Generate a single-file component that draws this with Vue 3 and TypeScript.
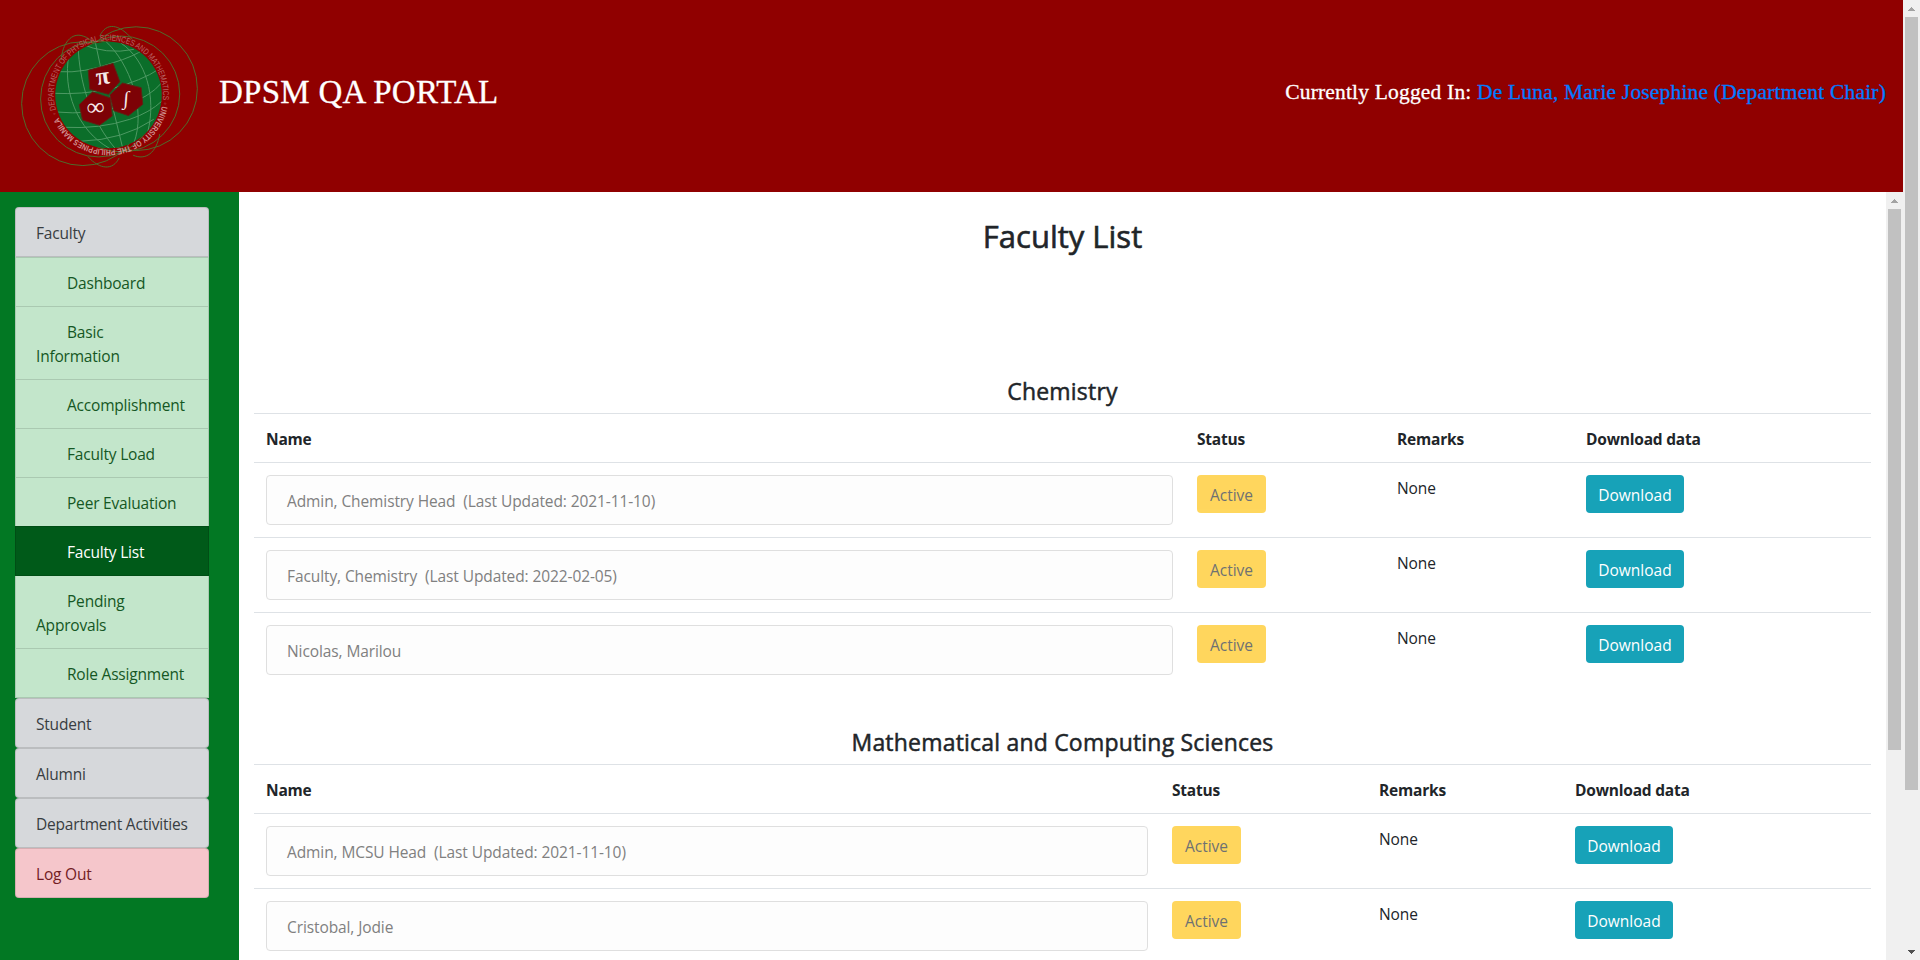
<script setup lang="ts">
interface NavItem {
  label: string
  kind: 'group' | 'sub' | 'exit'
  active?: boolean
}
interface Person {
  name: string
  updated?: string
}
interface Unit {
  title: string
  columns: number[]
  people: Person[]
}

const nav: NavItem[] = [
  { label: 'Faculty', kind: 'group' },
  { label: 'Dashboard', kind: 'sub' },
  { label: 'Basic Information', kind: 'sub' },
  { label: 'Accomplishment', kind: 'sub' },
  { label: 'Faculty Load', kind: 'sub' },
  { label: 'Peer Evaluation', kind: 'sub' },
  { label: 'Faculty List', kind: 'sub', active: true },
  { label: 'Pending Approvals', kind: 'sub' },
  { label: 'Role Assignment', kind: 'sub' },
  { label: 'Student', kind: 'group' },
  { label: 'Alumni', kind: 'group' },
  { label: 'Department Activities', kind: 'group' },
  { label: 'Log Out', kind: 'exit' },
]

const units: Unit[] = [
  {
    title: 'Chemistry',
    columns: [931, 200, 189, 297],
    people: [
      { name: 'Admin, Chemistry Head', updated: '2021-11-10' },
      { name: 'Faculty, Chemistry', updated: '2022-02-05' },
      { name: 'Nicolas, Marilou' },
    ],
  },
  {
    title: 'Mathematical and Computing Sciences',
    columns: [906, 207, 196, 308],
    people: [
      { name: 'Admin, MCSU Head', updated: '2021-11-10' },
      { name: 'Cristobal, Jodie' },
    ],
  },
]

const headings = ['Name', 'Status', 'Remarks', 'Download data']
</script>

<template>
  <div class="window">
    <div class="page">
      <header class="banner">
        <svg class="logo" viewBox="0 0 640 576" width="213" height="192">
          <defs>
            <clipPath id="globe"><circle cx="326" cy="285" r="160" /></clipPath>
            <path id="ring" d="M172 342 A164 164 0 0 1 480 228 A164 164 0 0 1 172 342" />
          </defs>
          <g class="orbits">
            <ellipse cx="249" cy="311" rx="184" ry="186" />
            <ellipse cx="409" cy="266" rx="184" ry="186" />
            <ellipse cx="296" cy="297" rx="174" ry="174" />
            <ellipse cx="364" cy="282" rx="176" ry="174" />
            <path d="M184 180 C187 130 215 95 250 108 C265 112 275 122 284 134" />
            <path d="M300 108 C318 66 358 70 398 118" />
            <path d="M264 470 C300 510 340 512 358 474" />
            <path d="M400 466 C438 482 470 460 480 402" />
          </g>
          <circle cx="326" cy="285" r="160" fill="#0b6e2a" />
          <g class="grid" clip-path="url(#globe)">
            <path d="M285 120 L302 200 M330 285 L370 450" />
            <path d="M235 140 C238 240 270 360 350 450" />
            <path d="M207 165 C188 270 230 390 330 446" />
            <path d="M318 124 C390 190 440 330 402 430" />
            <path d="M362 128 C440 180 470 290 444 396" />
            <path d="M240 130 Q320 165 402 148" />
            <path d="M180 215 Q250 220 340 188 Q400 170 436 146" />
            <path d="M166 280 Q240 284 330 268 Q430 240 476 208" />
            <path d="M168 336 Q270 346 370 318 Q450 292 486 248" />
            <path d="M190 382 Q300 388 390 358 Q450 338 488 302" />
            <path d="M242 424 Q370 420 462 358" />
          </g>
          <g class="tiles">
            <path d="M265 211 L340 190 L360 245 L326 283 L270 268 Z" />
            <path d="M278 276 L332 294 L337 348 L299 376 L248 360 L238 314 Z" />
            <path d="M330 285 L368 249 L424 263 L429 313 L386 347 L342 332 Z" />
          </g>
          <g class="symbols">
            <text x="310" y="252" font-size="74" transform="rotate(-8 310 240)">π</text>
            <text x="287" y="345" font-size="74" transform="rotate(-5 287 324)">∞</text>
            <text x="379" y="315" font-size="60" transform="rotate(4 379 300)">∫</text>
          </g>
          <text class="ring">
            <textPath href="#ring" textLength="1020" lengthAdjust="spacingAndGlyphs">◦ DEPARTMENT OF PHYSICAL SCIENCES AND MATHEMATICS ◦ <tspan class="ring-lower">UNIVERSITY OF THE PHILIPPINES MANILA</tspan></textPath>
          </text>
        </svg>
        <h1 class="brand">DPSM QA PORTAL</h1>
        <p class="session">Currently Logged In: <a>De Luna, Marie Josephine (Department Chair)</a></p>
      </header>

      <div class="body">
        <nav class="sidebar">
          <ul class="menu">
            <li
              v-for="item in nav"
              :key="item.label"
              class="entry"
              :class="[item.kind, { active: item.active }]"
            >{{ item.label }}</li>
          </ul>
        </nav>

        <main class="content">
          <h2 class="title">Faculty List</h2>
          <section v-for="unit in units" :key="unit.title" class="unit">
            <h4 class="unit-title">{{ unit.title }}</h4>
            <table class="people">
              <colgroup>
                <col v-for="(w, i) in unit.columns" :key="i" :style="{ width: w + 'px' }" />
              </colgroup>
              <thead>
                <tr>
                  <th v-for="h in headings" :key="h">{{ h }}</th>
                </tr>
              </thead>
              <tbody>
                <tr v-for="p in unit.people" :key="p.name">
                  <td>
                    <div class="name">{{ p.name }}<template v-if="p.updated">&nbsp; (Last Updated: {{ p.updated }})</template></div>
                  </td>
                  <td><button class="btn status">Active</button></td>
                  <td class="remarks">None</td>
                  <td><button class="btn download">Download</button></td>
                </tr>
              </tbody>
            </table>
          </section>
        </main>

        <div class="scrollbar inner">
          <svg class="arrow" width="17" height="17"><path d="M5 11h7v-1h-1v-1h-1v-1h-1v-1h-1v1h-1v1h-1v1h-1z" fill="#a3a3a3" /></svg>
          <div class="thumb"></div>
        </div>
      </div>
    </div>

    <div class="scrollbar outer">
      <svg class="arrow" width="17" height="17"><path d="M5 11h7v-1h-1v-1h-1v-1h-1v-1h-1v1h-1v1h-1v1h-1z" fill="#a3a3a3" /></svg>
      <div class="thumb"></div>
      <svg class="arrow down" width="17" height="17"><path d="M5 7h7v1h-1v1h-1v1h-1v1h-1v-1h-1v-1h-1v-1h-1z" fill="#505050" /></svg>
    </div>
  </div>
</template>

<style>
body {
  margin: 0;
  overflow: hidden;
}
</style>

<style scoped>
* {
  box-sizing: border-box;
}
.window {
  display: flex;
  width: 1920px;
  height: 960px;
  overflow: hidden;
  font: 400 15.5px/24px 'Open Sans', 'Noto Sans', sans-serif;
  color: #212529;
  background: #fff;
}
.page {
  display: flex;
  flex-direction: column;
  width: 1903px;
}
.banner {
  display: flex;
  align-items: center;
  flex: none;
  height: 192px;
  padding-right: 17px;
  background: #900000;
  color: #fff;
  font-family: 'Liberation Serif', serif;
}
.logo {
  flex: none;
}
.orbits {
  fill: none;
  stroke: #4f6b2b;
  stroke-width: 3;
}
.grid {
  fill: none;
  stroke: #4d9a63;
  stroke-width: 3;
}
.tiles {
  fill: #7d0206;
  stroke: #5b2414;
  stroke-width: 3;
}
.symbols {
  fill: #f5e9e9;
  text-anchor: middle;
  font-family: 'Liberation Serif', serif;
  font-weight: 700;
}
.ring {
  fill: #b96464;
  font: 400 25px 'Liberation Sans', sans-serif;
}
.ring-lower {
  fill: #d09090;
  font-weight: 700;
}
.brand {
  margin: 0 auto 8px 6px;
  font-size: 33px;
  font-weight: 400;
  line-height: 38px;
  letter-spacing: 0.25px;
  white-space: nowrap;
  -webkit-text-stroke: 0.3px currentColor;
}
.session {
  margin: 0 0 8px;
  font-size: 21.5px;
  letter-spacing: 0.18px;
  white-space: nowrap;
  -webkit-text-stroke: 0.3px currentColor;
}
.session a {
  color: #007bff;
  -webkit-text-stroke-color: #007bff;
}
.body {
  display: flex;
  flex: none;
  height: 768px;
  overflow: hidden;
}
.sidebar {
  flex: none;
  width: 239px;
  padding: 15px;
  background: #027823;
  letter-spacing: -0.2px;
}
.menu {
  width: 194px;
  margin: 0;
  padding: 0;
  list-style: none;
}
.entry {
  padding: 13px 20px 11px;
  border: 1px solid rgba(0, 0, 0, 0.125);
}
.group {
  border-radius: 4px;
  background: #d6d8db;
  color: #383d41;
  white-space: nowrap;
}
.exit {
  border-radius: 4px;
  background: #f5c6cb;
  color: #721c24;
}
.sub {
  border-top-width: 0;
  background: #c3e6cb;
  color: #155724;
  text-indent: 31px;
}
.group:first-child {
  border-radius: 4px 4px 0 0;
}
.group + .sub {
  border-top-width: 1px;
}
.sub.active {
  margin-top: -1px;
  border-top-width: 1px;
  background: #005a19;
  color: #fff;
}
.content {
  flex: none;
  width: 1647px;
  padding: 25px 15px 0;
  overflow: hidden;
}
.title {
  margin: 0 0 122px;
  font-size: 31px;
  font-weight: 500;
  line-height: 38px;
  text-align: center;
  -webkit-text-stroke: 0.6px currentColor;
}
.unit {
  margin-bottom: 41px;
}
.unit-title {
  margin: 0 0 7px;
  font-size: 23px;
  font-weight: 500;
  line-height: 29px;
  letter-spacing: 0.2px;
  text-align: center;
  -webkit-text-stroke: 0.5px currentColor;
}
.people {
  width: 1617px;
  table-layout: fixed;
  border-collapse: separate;
  border-spacing: 0;
}
th,
td {
  padding: 12px;
  border-top: 1px solid #dee2e6;
  text-align: left;
  vertical-align: top;
}
th {
  padding-top: 13px;
  padding-bottom: 11px;
  font-weight: 700;
  letter-spacing: -0.2px;
}
.remarks {
  padding-top: 13px;
  letter-spacing: -0.1px;
}
.name {
  height: 50px;
  padding: 13px 20px 11px;
  border: 1px solid #dfdfdf;
  border-radius: 4px;
  background: #fdfdfd;
  color: #808080;
  letter-spacing: -0.1px;
}
.btn {
  display: block;
  height: 38px;
  padding: 1px 0 0;
  border: 0;
  border-radius: 4px;
  font: inherit;
}
.status {
  width: 69px;
  background: #ffc107;
  color: #212529;
  opacity: 0.65;
}
.download {
  width: 98px;
  background: #17a2b8;
  color: #fff;
}
.scrollbar {
  display: flex;
  flex-direction: column;
  align-items: center;
  flex: none;
  width: 17px;
  background: #f0f0f0;
}
.arrow {
  flex: none;
}
.thumb {
  flex: none;
  width: 13px;
  background: #c1c1c1;
}
.inner .thumb {
  height: 541px;
}
.outer .thumb {
  height: 773px;
}
.down {
  margin-top: auto;
}
</style>
